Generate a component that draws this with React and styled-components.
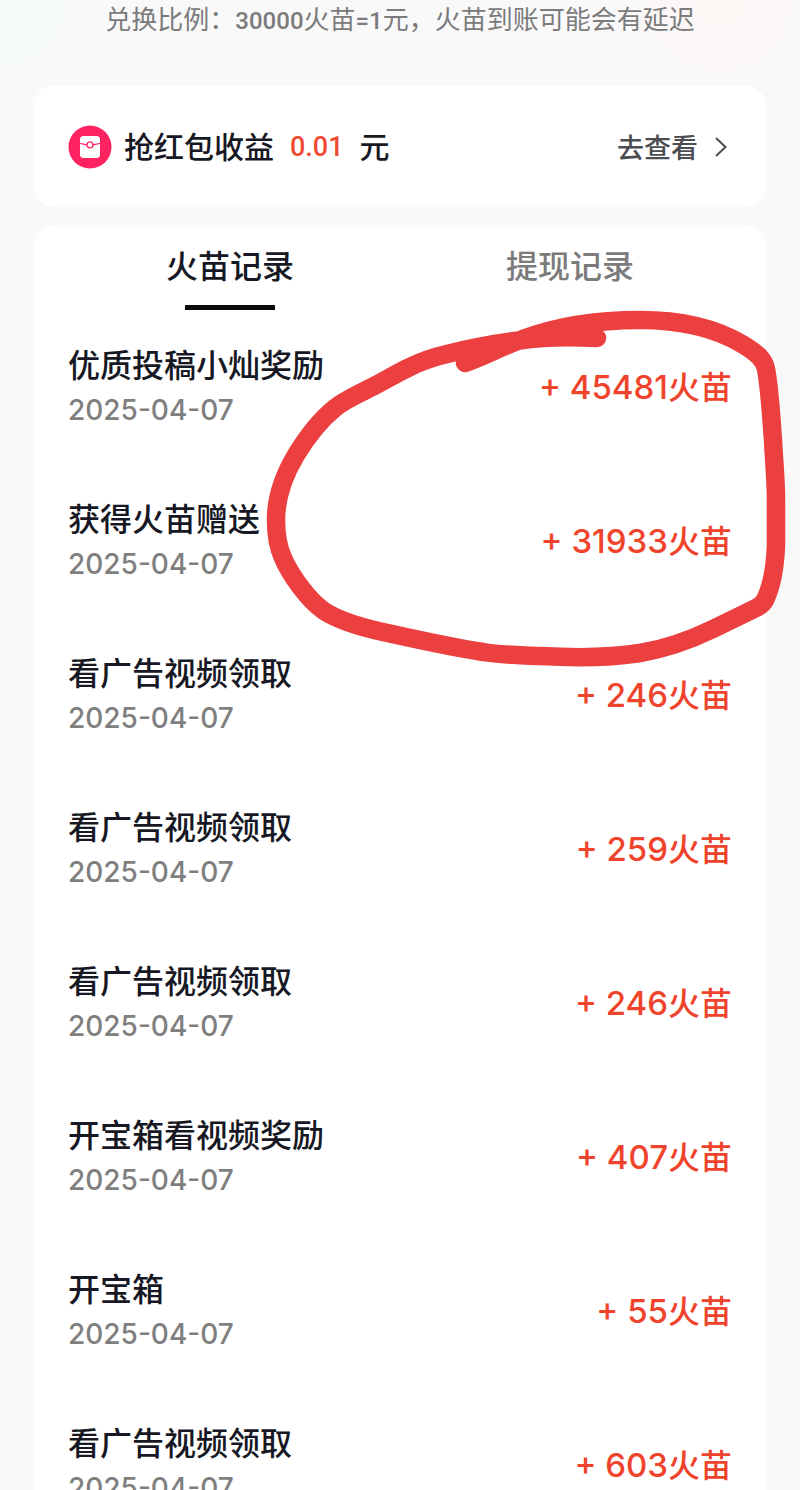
import React, { useState } from "react";
import styled, { createGlobalStyle } from "styled-components";

const GlobalStyle = createGlobalStyle`
  * {
    box-sizing: border-box;
  }

  body {
    margin: 0;
    background-color: #f9f9f9;
    font-family: Inter, "Noto Sans CJK SC", sans-serif;
  }
`;

const Page = styled.div`
  height: 100vh;
  overflow: hidden;
  padding: 0 34px;
  background: radial-gradient(circle at 0 0, #f5fbfa 0, transparent 120px),
    radial-gradient(circle at 90% 0, #fdf6f5 0, transparent 120px), #f9f9f9;
`;

const Ratio = styled.p`
  margin: 0;
  height: 86px;
  line-height: 40px;
  font-size: 26px;
  color: #7b7b7c;
  text-align: center;
  white-space: nowrap;
`;

const Digits = styled.span`
  font-family: Roboto, sans-serif;
  font-size: 24px;
  font-weight: 500;
`;

const Card = styled.section`
  display: flex;
  align-items: center;
  justify-content: space-between;
  height: 121px;
  margin-bottom: 18px;
  padding: 0 38px 0 34px;
  border-radius: 20px;
  background-color: #fff;
`;

const Income = styled.div`
  display: flex;
  align-items: center;
  font-size: 30px;
  font-weight: 500;
  line-height: 40px;
  color: #161823;
`;

const PacketIcon = styled.svg`
  width: 44px;
  height: 44px;
  margin-right: 12px;
`;

const Money = styled.span`
  margin: 0 16px;
  font-family: Roboto, sans-serif;
  font-size: 27px;
  color: #f04a35;
`;

const CheckLink = styled.a`
  display: flex;
  align-items: center;
  gap: 16px;
  font-size: 27px;
  font-weight: 500;
  color: #4c4d52;
  text-decoration: none;
`;

const Chevron = styled.svg`
  width: 14px;
  height: 22px;
`;

const Panel = styled.section`
  position: relative;
  padding: 0 34px;
  border-radius: 20px;
  background-color: #fff;
`;

const Tabs = styled.div`
  display: flex;
  margin: 0 -8px;
`;

const Tab = styled.button`
  flex: 1;
  display: flex;
  flex-direction: column;
  align-items: center;
  height: 85px;
  padding: 4px 0 0;
  border: none;
  background-color: transparent;
  font-family: inherit;
  font-size: 32px;
  font-weight: 500;
  line-height: 76px;
  color: ${({ $active }) => ($active ? "#161823" : "#7b7b7c")};
  cursor: pointer;

  &::after {
    content: "";
    width: 90px;
    height: 5px;
    flex-shrink: 0;
    background-color: ${({ $active }) => ($active ? "#0a0a0c" : "transparent")};
  }
`;

const List = styled.ul`
  margin: 0;
  padding: 10px 0 0;
  list-style: none;
`;

const Item = styled.li`
  display: flex;
  align-items: flex-start;
  justify-content: space-between;
  height: 154px;
  padding-top: 24px;
  white-space: nowrap;
`;

const Title = styled.div`
  font-size: 32px;
  font-weight: 500;
  line-height: 44px;
  color: #161823;
`;

const Day = styled.time`
  display: block;
  font-size: 28px;
  font-weight: 500;
  line-height: 44px;
  color: #7f7f80;
`;

const Amount = styled.div`
  font-size: 32px;
  font-weight: 500;
  line-height: 86px;
  color: #f0432c;
`;

const Count = styled.span`
  font-size: 33px;
`;

const Marker = styled.svg`
  position: absolute;
  top: 80px;
  right: -24px;
  width: 530px;
  height: 368px;
  pointer-events: none;
`;

const tabs = ["火苗记录", "提现记录"];

const records = [
  { id: 1, title: "优质投稿小灿奖励", day: "2025-04-07", amount: 45481 },
  { id: 2, title: "获得火苗赠送", day: "2025-04-07", amount: 31933 },
  { id: 3, title: "看广告视频领取", day: "2025-04-07", amount: 246 },
  { id: 4, title: "看广告视频领取", day: "2025-04-07", amount: 259 },
  { id: 5, title: "看广告视频领取", day: "2025-04-07", amount: 246 },
  { id: 6, title: "开宝箱看视频奖励", day: "2025-04-07", amount: 407 },
  { id: 7, title: "开宝箱", day: "2025-04-07", amount: 55 },
  { id: 8, title: "看广告视频领取", day: "2025-04-07", amount: 603 },
];

const Record = ({ record }) => (
  <Item>
    <div>
      <Title>{record.title}</Title>
      <Day dateTime={record.day}>{record.day}</Day>
    </div>
    <Amount>
      <Count>+ {record.amount}</Count>火苗
    </Amount>
  </Item>
);

const App = () => {
  const [active, setActive] = useState(0);

  return (
    <Page>
      <GlobalStyle />
      <Ratio>
        兑换比例：<Digits>30000</Digits>火苗<Digits>=1</Digits>
        元，火苗到账可能会有延迟
      </Ratio>
      <Card>
        <Income>
          <PacketIcon viewBox="0 0 44 44" aria-hidden="true">
            <circle cx="22" cy="22" r="21.5" fill="#fe2360" />
            <rect x="12" y="11" width="20" height="22" rx="3.5" fill="#fff" />
            <path
              d="M12 18.5C15 19 17 19.6 19 19.8M25 19.8C27 19.6 29 19 32 18.5"
              fill="none"
              stroke="#fe2360"
              strokeWidth="1.2"
            />
            <circle
              cx="22"
              cy="19.8"
              r="3"
              fill="#fff"
              stroke="#fe2360"
              strokeWidth="1.3"
            />
          </PacketIcon>
          抢红包收益<Money>0.01</Money>元
        </Income>
        <CheckLink href="#income">
          去查看
          <Chevron viewBox="0 0 14 22" aria-hidden="true">
            <path
              d="M2 2L11.5 11L2 20"
              fill="none"
              stroke="#4c4d52"
              strokeWidth="2"
            />
          </Chevron>
        </CheckLink>
      </Card>
      <Panel>
        <Tabs role="tablist">
          {tabs.map((name, i) => (
            <Tab
              key={name}
              role="tab"
              aria-selected={active === i}
              $active={active === i}
              onClick={() => setActive(i)}
            >
              {name}
            </Tab>
          ))}
        </Tabs>
        <List>
          {records.map((record) => (
            <Record key={record.id} record={record} />
          ))}
        </List>
        <Marker viewBox="260 305 530 368" aria-hidden="true">
          <path
            d="M465 363C485 356 503 346 523 339C560 325 600 320 640 320C682 320 715 328 742 344C757 353 764 359 766 369C770 391 771 415 773 440C774 462 776 480 776 500V545C775 570 771 588 765 600C763 604 760 606 756 608L713 629C688 641 665 649 640 653C615 657 577 658 540 656C520 655 500 655 483 652C450 647 415 639 383 632C360 627 338 620 324 611C307 599 290 574 283 558C278 547 276 534 276 520C276 497 284 475 296 455C307 437 320 420 335 408C345 400 357 395 370 388C384 381 397 373 410 367C422 361 434 357 447 354C471 348 497 343 523 340C550 336 575 337 597 338"
            fill="none"
            stroke="#ec4040"
            strokeWidth="18.5"
            strokeLinecap="round"
            strokeLinejoin="round"
          />
        </Marker>
      </Panel>
    </Page>
  );
};

export default App;
